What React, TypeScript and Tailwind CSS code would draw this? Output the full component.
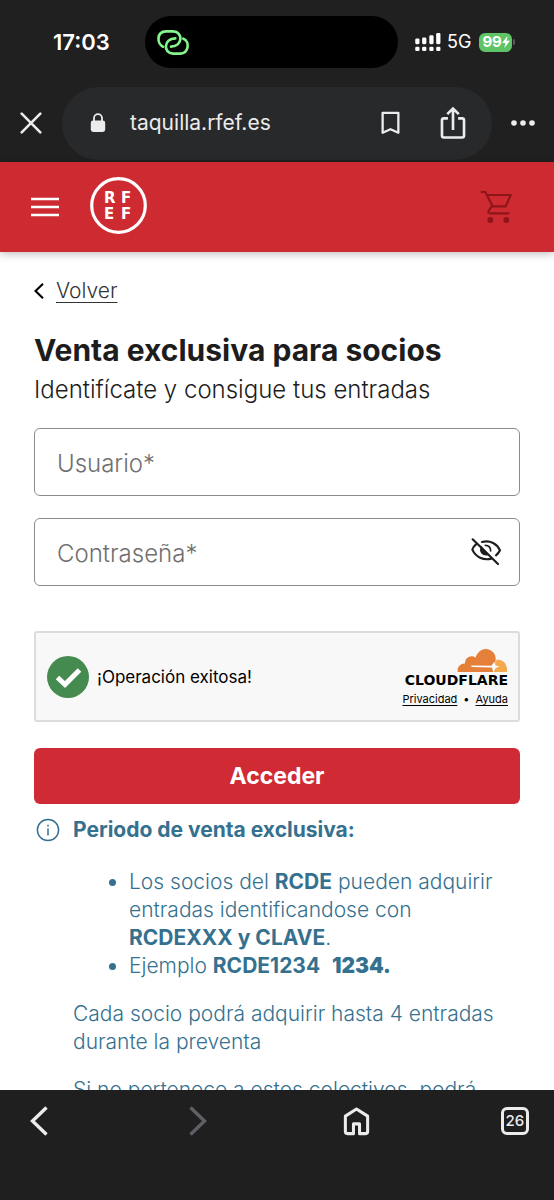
import { memo } from "react";
import type { ReactNode } from "react";

type Field = {
  id: string;
  type: string;
  label: string;
  action?: ReactNode;
};

const HotspotIcon = () => (
  <svg viewBox="468 84 102 81" className="h-[27px] w-[34px]" fill="none" stroke="#84f58c" strokeWidth="8" strokeLinecap="round">
    <path d="M489 137C471 129 468 92 498 91H520C549 92 550 135 513 137" />
    <path d="M550 113C570 120 567 157 541 158H519C489 157 490 113 526 112" />
  </svg>
);

const SignalIcon = () => (
  <svg viewBox="414 96 78 55" className="h-[18px] w-[26px]" fill="#fff">
    <rect x="414" y="113" width="13" height="17" rx="4" />
    <rect x="435" y="110" width="13" height="20" rx="4" />
    <rect x="457" y="103" width="13" height="27" rx="4" />
    <rect x="478" y="96" width="13" height="34" rx="4" />
    <rect x="414" y="138" width="13" height="13" rx="4" />
    <rect x="435" y="138" width="13" height="13" rx="4" />
    <rect x="457" y="138" width="13" height="13" rx="4" />
    <rect x="478" y="138" width="13" height="13" rx="4" />
  </svg>
);

const CloseIcon = () => (
  <svg viewBox="0 0 22 22" className="size-[22px]" fill="none" stroke="currentColor" strokeWidth="2.6" strokeLinecap="round">
    <path d="M1.7 1.7 20.3 20.3M20.3 1.7 1.7 20.3" />
  </svg>
);

const LockIcon = () => (
  <svg viewBox="0 0 16 20" className="h-5 w-4" fill="currentColor">
    <rect x="0.8" y="7.5" width="14.4" height="11.5" rx="2.4" />
    <path d="M4 9V5.2a4 4 0 0 1 8 0V9" fill="none" stroke="currentColor" strokeWidth="1.8" />
  </svg>
);

const BookmarkIcon = () => (
  <svg viewBox="312 332 58 72" className="h-6 w-[19px]" fill="none" stroke="currentColor" strokeWidth="7" strokeLinejoin="round">
    <path d="M317 337H365V398L341 387 317 398Z" />
  </svg>
);

const ShareIcon = () => (
  <svg viewBox="486 318 79 102" className="h-[34px] w-[26px]" fill="none" stroke="currentColor" strokeWidth="8">
    <path d="M510 355H498Q492 355 492 361V407Q492 413 498 413H553Q559 413 559 407V361Q559 355 553 355H541" />
    <path d="M525.5 390V327M508 342 525.5 325 543 342" />
  </svg>
);

const MoreIcon = () => (
  <svg viewBox="0 0 24 6" className="h-1.5 w-6" fill="currentColor">
    <circle cx="3" cy="3" r="2.8" />
    <circle cx="12" cy="3" r="2.8" />
    <circle cx="21" cy="3" r="2.8" />
  </svg>
);

const MenuIcon = () => (
  <svg viewBox="0 0 28 20" className="h-5 w-7" stroke="#fff" strokeWidth="2.4">
    <path d="M0 2H28M0 10H28M0 18H28" />
  </svg>
);

const CartIcon = () => (
  <svg viewBox="238 90 96 102" className="h-[34px] w-8" fill="none" stroke="#8f151b" strokeWidth="6.5">
    <path d="M240 96H254L276 139H315L330 105H259" />
    <path d="M273 139 263 154Q262 160 269 160H326" />
    <circle cx="269" cy="180" r="5.5" fill="#8f151b" />
    <circle cx="317" cy="180" r="5.5" fill="#8f151b" />
  </svg>
);

const EyeOffIcon = () => (
  <svg viewBox="90 84 96 90" className="h-[30px] w-8" fill="none" stroke="#1d1d1d" strokeWidth="6.5" strokeLinecap="round">
    <path d="M98 91 174 165" />
    <path d="M126 99C151 92 172 105 180 124C177 130 173 135 168 139" />
    <path d="M108 106C102 111 98 117 97 122C107 144 130 155 154 149" />
    <path d="M136 109C146 109 152 116 152 126" strokeWidth="5" />
    <path d="M124 114C118 128 128 141 144 137Z" fill="#1d1d1d" strokeWidth="4" />
  </svg>
);

const SuccessIcon = () => (
  <svg viewBox="0 0 42 42" className="size-[42px] shrink-0">
    <circle cx="21" cy="21" r="21" fill="#458b50" />
    <path d="M10.5 21.5 18 28.5 32.5 14" fill="none" stroke="#fff" strokeWidth="5" />
  </svg>
);

const CloudIcon = () => (
  <svg viewBox="232 84 152 74" className="h-[25px] w-[51px]">
    <path d="M234 155C232 140 242 129 256 130C255 113 274 102 287 113C294 95 306 87 317 87C337 88 350 103 347 122L344 155Z" fill="#e5803a" />
    <path d="M350 119C368 115 384 132 381 155H338Z" fill="#f2a94f" />
    <path d="M275 136 335 137 343 125 347 136 358 139 347 143 341 156 336 142 275 140Z" fill="#fff" />
  </svg>
);

const InfoIcon = () => (
  <svg viewBox="0 0 24 24" className="size-6 shrink-0" fill="none" stroke="currentColor" strokeWidth="1.5">
    <circle cx="12" cy="12" r="10.6" />
    <path d="M12 10.5V17.5M12 6.8V8.6" />
  </svg>
);

const ChevronIcon = ({ className }: { className: string }) => (
  <svg viewBox="0 0 18 30" className={className} fill="none" stroke="currentColor" strokeWidth="3.4">
    <path d="M16.5 1.5 2.5 15 16.5 28.5" />
  </svg>
);

const HomeIcon = () => (
  <svg viewBox="946 382 80 86" className="h-[29px] w-[27px]" fill="none" stroke="currentColor" strokeWidth="9" strokeLinejoin="round">
    <path d="M953 409 986 388 1019 409V455Q1019 461 1013 461H995V432H977V461H959Q953 461 953 455Z" />
  </svg>
);

const fields: Field[] = [
  { id: "usuario", type: "text", label: "Usuario*" },
  {
    id: "clave",
    type: "password",
    label: "Contraseña*",
    action: (
      <button type="button" aria-label="Mostrar contraseña">
        <EyeOffIcon />
      </button>
    ),
  },
];

const StatusBar = () => (
  <div className="grid h-[84px] grid-cols-[145px_1fr_156px] items-center text-white">
    <span className="pl-[53px] font-semibold text-[22px] leading-7">17:03</span>
    <div className="flex h-[52px] items-center rounded-full bg-black pl-[11px]">
      <HotspotIcon />
    </div>
    <div className="flex items-center pl-[17px]">
      <SignalIcon />
      <span className="pl-1.5 text-lg">5G</span>
      <span className="ml-2 flex h-[19px] items-center rounded-md bg-[#5fc466] pr-0.5 pl-[3px] font-bold text-[15px]">
        99
        <svg viewBox="0 0 8 12" className="h-3 w-2" fill="#fff">
          <path d="M5.5 0 0 7H3.4L2.3 12 8 4.8H4.6Z" />
        </svg>
      </span>
      <span className="ml-px h-1.5 w-0.5 rounded-r bg-[#5a5a5a]" />
    </div>
  </div>
);

const AddressBar = () => (
  <div className="flex h-[78px] items-center text-[#ececec]">
    <button type="button" aria-label="Cerrar" className="flex w-[62px] justify-center">
      <CloseIcon />
    </button>
    <div className="flex h-[73px] flex-1 items-center rounded-full bg-[#28292b] pr-[26px] pl-7">
      <LockIcon />
      <span className="flex-1 pl-6 text-[21px]">taquilla.rfef.es</span>
      <button type="button" aria-label="Guardar" className="mr-10">
        <BookmarkIcon />
      </button>
      <button type="button" aria-label="Compartir">
        <ShareIcon />
      </button>
    </div>
    <button type="button" aria-label="Más opciones" className="flex w-[62px] justify-center">
      <MoreIcon />
    </button>
  </div>
);

const SiteHeader = () => (
  <header className="relative flex h-[90px] shrink-0 items-center bg-[#cd2b31] pr-[42px] pl-[31px] shadow-[0_2px_8px_rgba(0,0,0,0.25)]">
    <button type="button" aria-label="Menú">
      <MenuIcon />
    </button>
    <a href="#inicio" className="mb-1 ml-[31px]">
      <svg viewBox="0 0 57 57" className="size-[57px]" fill="#fff">
        <circle cx="28.5" cy="28.5" r="26.8" fill="none" stroke="#fff" strokeWidth="3.2" />
        <g className="font-['DejaVu_Sans'] font-bold text-[15px]">
          <text x="14" y="26">R</text>
          <text x="31" y="26">F</text>
          <text x="14" y="42">E</text>
          <text x="31" y="42">F</text>
        </g>
      </svg>
    </a>
    <button type="button" aria-label="Carrito" className="ml-auto">
      <CartIcon />
    </button>
  </header>
);

const Verification = () => (
  <div className="mt-[45px] flex h-[91px] items-center rounded-[3px] border-2 border-[#dcdcdc] bg-[#f8f8f8] pr-2.5 pl-[11px] text-black">
    <SuccessIcon />
    <span className="pt-0.5 pl-2 text-[17px]">¡Operación exitosa!</span>
    <div className="ml-auto flex flex-col items-end pt-1.5">
      <CloudIcon />
      <span className="font-['DejaVu_Sans'] font-bold text-sm leading-[14px]">CLOUDFLARE</span>
      <div className="flex gap-1.5 text-[11px] leading-6">
        <a href="#privacidad" className="underline underline-offset-2">Privacidad</a>
        <span>•</span>
        <a href="#ayuda" className="underline underline-offset-2">Ayuda</a>
      </div>
    </div>
  </div>
);

const LoginForm = memo(() => (
  <form>
    <div className="mt-[18px] flex flex-col gap-[22px]">
      {fields.map((field) => (
        <div
          key={field.id}
          className="flex h-[68px] items-center rounded-md border border-[#8c8c8c] pr-[17px] pl-[22px]"
        >
          <input
            id={field.id}
            type={field.type}
            aria-label={field.label}
            placeholder={field.label}
            className="h-full min-w-0 flex-1 bg-transparent pt-[3px] font-light text-[#1d1d1d] text-2xl outline-none placeholder:text-[#6f6f6f]"
          />
          {field.action}
        </div>
      ))}
    </div>
    <Verification />
    <button
      type="submit"
      className="mt-[26px] h-14 w-full rounded-md bg-[#d02b34] font-bold text-[23px] text-white"
    >
      Acceder
    </button>
  </form>
));

LoginForm.displayName = "LoginForm";

const SaleInfo = () => (
  <section className="mt-3 flex gap-[13px] pl-0.5 font-light text-[#35718f] text-[21px] leading-7">
    <div className="flex h-7 items-center">
      <InfoIcon />
    </div>
    <div className="flex-1">
      <h2 className="font-bold">Periodo de venta exclusiva:</h2>
      <ul className="mt-6 list-disc pl-14">
        <li>
          Los socios del <b className="font-bold">RCDE</b> pueden adquirir
          <br />
          entradas identificandose con
          <br />
          <b className="font-bold">RCDEXXX y CLAVE</b>.
        </li>
        <li>
          Ejemplo <b className="font-bold">RCDE1234</b>&nbsp; <b className="font-black">1234.</b>
        </li>
      </ul>
      <p className="mt-5">
        Cada socio podrá adquirir hasta 4 entradas
        <br />
        durante la preventa
      </p>
      <p className="mt-5">Si no pertenece a estos colectivos, podrá</p>
    </div>
  </section>
);

const BottomBar = () => (
  <nav className="flex h-[110px] shrink-0 justify-between bg-[#1f1f1f] px-[25px] pt-4 text-[#ececec]">
    <button type="button" aria-label="Atrás" className="flex h-[30px] w-7 items-center justify-center">
      <ChevronIcon className="h-[30px] w-[18px]" />
    </button>
    <button type="button" aria-label="Adelante" className="flex h-[30px] w-7 items-center justify-center text-[#5f6065]">
      <ChevronIcon className="h-[30px] w-[18px] rotate-180" />
    </button>
    <button type="button" aria-label="Inicio" className="flex h-[30px] w-7 items-center justify-center">
      <HomeIcon />
    </button>
    <button
      type="button"
      aria-label="Pestañas"
      className="mt-px flex size-7 items-center justify-center rounded-md border-[3px] border-current font-medium text-[15px]"
    >
      26
    </button>
  </nav>
);

export default function App() {
  return (
    <div className="flex h-screen flex-col overflow-hidden bg-white font-[Inter,'Liberation_Sans',sans-serif]">
      <div className="shrink-0 bg-[#202020]">
        <StatusBar />
        <AddressBar />
      </div>
      <SiteHeader />
      <main className="min-h-0 flex-1 overflow-hidden px-[34px] pt-6 text-[#1d1d1d]">
        <a href="#volver" className="flex h-[30px] items-center gap-3 font-light text-[#333] text-[21px]">
          <ChevronIcon className="h-4 w-[10px] stroke-4 text-black" />
          <span className="underline decoration-1 underline-offset-4">Volver</span>
        </a>
        <h1 className="mt-6 font-bold text-[30px] leading-10">Venta exclusiva para socios</h1>
        <p className="font-light text-2xl leading-10">Identifícate y consigue tus entradas</p>
        <LoginForm />
        <SaleInfo />
      </main>
      <BottomBar />
    </div>
  );
}
